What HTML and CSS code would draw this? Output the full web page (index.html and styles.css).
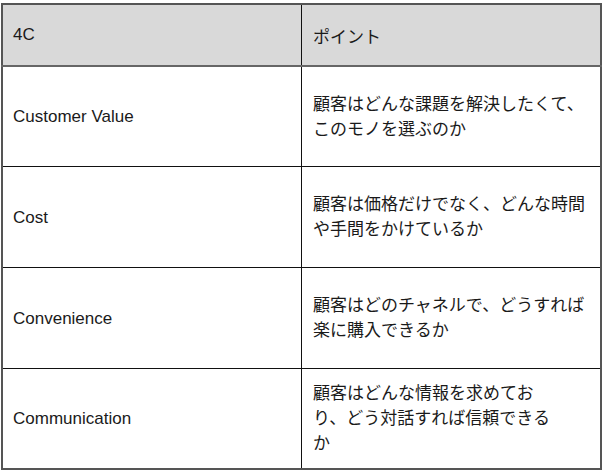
FILE: index.html
```html
<!DOCTYPE html>
<html lang="ja">
<head>
<meta charset="utf-8">
<link rel="stylesheet" href="styles.css">
</head>
<body>
<div class="wrap">
<table class="t4c">
  <thead>
    <tr><th class="c1">4C</th><th class="c2">ポイント</th></tr>
  </thead>
  <tbody>
    <tr class="r-a"><td class="c1">Customer Value</td><td class="c2">顧客はどんな課題を解決したくて、このモノを選ぶのか</td></tr>
    <tr class="r-b"><td class="c1">Cost</td><td class="c2">顧客は価格だけでなく、どんな時間や手間をかけているか</td></tr>
    <tr class="r-b"><td class="c1">Convenience</td><td class="c2">顧客はどのチャネルで、どうすれば楽に購入できるか</td></tr>
    <tr class="r-a"><td class="c1">Communication</td><td class="c2">顧客はどんな情報を求めてお<br>り、どう対話すれば信頼できる<br>か</td></tr>
  </tbody>
</table>
</div>
</body>
</html>
```
FILE: styles.css
```css
html, body { margin: 0; padding: 0; background: #fff; }
.wrap { padding: 3px 0 0 1px; }
.t4c {
  border-collapse: collapse;
  width: 601px;
  table-layout: fixed;
  font-family: "Liberation Sans", Arial, "Noto Sans CJK JP", sans-serif;
  font-size: 17px;
  color: #1a1a1a;
  border: 2px solid #555;
}
.t4c th, .t4c td {
  text-align: left;
  font-weight: normal;
  vertical-align: middle;
  padding: 0 4px 0 11px;
  border-left: 1px solid #111;
  border-right: 1px solid #111;
}
.t4c .c1 { width: 284px; padding-left: 10px; }
.t4c thead th {
  background: #d9d9d9;
  height: 60px;
  border-bottom: 2px solid #666;
}
.t4c tbody td {
  border-top: 1px solid #111;
  line-height: 25px;
}
.t4c .r-a td { height: 99px; }
.t4c .r-b td { height: 100px; }
```
